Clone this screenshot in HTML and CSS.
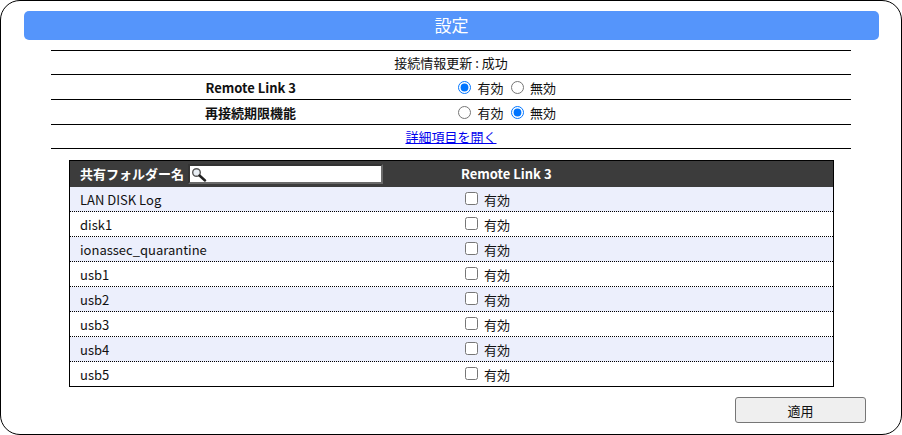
FILE: index.html
```html
<!DOCTYPE html>
<html lang="ja">
<head>
<meta charset="utf-8">
<title>設定</title>
<link rel="stylesheet" href="styles.css">
</head>
<body>
<main class="panel">
  <h1 class="title">設定</h1>
  <section class="settings">
    <div class="row status">接続情報更新 : 成功</div>
    <div class="row">
      <div class="label">Remote Link 3</div>
      <div class="options">
        <label class="opt"><input type="radio" name="a" checked><span>有効</span></label>
        <label class="opt"><input type="radio" name="a"><span>無効</span></label>
      </div>
    </div>
    <div class="row">
      <div class="label">再接続期限機能</div>
      <div class="options">
        <label class="opt"><input type="radio" name="b"><span>有効</span></label>
        <label class="opt"><input type="radio" name="b" checked><span>無効</span></label>
      </div>
    </div>
    <div class="row link-row"><a href="#">詳細項目を開く</a></div>
  </section>
  <section class="shares">
    <div class="thead">
      <div class="name-col">
        <span>共有フォルダー名</span>
        <span class="search">
          <svg width="16" height="16" viewBox="0 0 16 16" class="lens"><circle cx="4.5" cy="6.5" r="3.8" fill="#e8eef4" stroke="#555" stroke-width="1.4"/><path d="M7.5 9.5l5.5 5" stroke="#222" stroke-width="2.4" stroke-linecap="round"/></svg>
        </span>
      </div>
      <div class="rl-col">Remote Link 3</div>
    </div>
    <div class="trow odd"><div class="name-col">LAN DISK Log</div><label class="check"><input type="checkbox"><span>有効</span></label></div>
    <div class="trow"><div class="name-col">disk1</div><label class="check"><input type="checkbox"><span>有効</span></label></div>
    <div class="trow odd"><div class="name-col">ionassec_quarantine</div><label class="check"><input type="checkbox"><span>有効</span></label></div>
    <div class="trow"><div class="name-col">usb1</div><label class="check"><input type="checkbox"><span>有効</span></label></div>
    <div class="trow odd"><div class="name-col">usb2</div><label class="check"><input type="checkbox"><span>有効</span></label></div>
    <div class="trow"><div class="name-col">usb3</div><label class="check"><input type="checkbox"><span>有効</span></label></div>
    <div class="trow odd"><div class="name-col">usb4</div><label class="check"><input type="checkbox"><span>有効</span></label></div>
    <div class="trow last"><div class="name-col">usb5</div><label class="check"><input type="checkbox"><span>有効</span></label></div>
  </section>
  <div class="actions"><button type="button" class="apply">適用</button></div>
</main>
</body>
</html>
```
FILE: styles.css
```css
* { box-sizing: border-box; }
html, body { margin: 0; padding: 0; background: #fff; }
body {
  width: 902px;
  height: 435px;
  overflow: hidden;
  font-family: "Noto Sans CJK JP", "Noto Sans", sans-serif;
  font-size: 13px;
  line-height: 19px;
  color: #111;
}
.panel {
  width: 902px;
  height: 435px;
  border: 1px solid #000;
  border-radius: 20px;
  padding: 10px 22px 0 23px;
}
.title {
  margin: 0;
  height: 29px;
  background: #5595fb;
  border-radius: 5px;
  color: #fff;
  font-size: 17px;
  font-weight: 400;
  line-height: 28px;
  text-align: center;
}
.settings {
  margin: 10px 28px 0 27px;
  border-top: 1px solid #000;
}
.row {
  display: flex;
  align-items: center;
  height: 25px;
  border-bottom: 1px solid #000;
}
.status, .link-row { height: 24px; justify-content: center; }
.label {
  width: 245px;
  text-align: right;
  font-weight: 700;
}
.options {
  display: flex;
  margin-left: 162px;
  gap: 7px;
}
.opt { display: flex; align-items: center; }
.opt input { margin: 0 6.5px 0 0; width: 13px; height: 13px; accent-color: #0075ff; }
.link-row a { color: #00e; }
.shares {
  margin: 11px 45px 0 45px;
  border: 1px solid #000;
}
.thead {
  display: flex;
  align-items: center;
  height: 26px;
  padding-bottom: 2px;
  background: #3c3c3c;
  color: #fff;
  font-weight: 700;
}
.name-col { width: 391px; padding-left: 10px; display: flex; align-items: center; }
.search {
  display: flex;
  align-items: center;
  width: 195px;
  height: 20px;
  margin: 2px 0 0 4px;
  background: #fff;
  border: 2px solid #6b6b6b;
  border-top-color: #333;
  border-left-color: #333;
}
.lens { margin-left: 2px; }
.trow {
  display: flex;
  align-items: center;
  height: 25px;
  border-bottom: 1px dotted #000;
}
.trow.odd { background: #eceffc; }
.trow.last { border-bottom: 0; height: 24px; }
.check { display: flex; align-items: center; margin-left: 4px; }
.check input { margin: 0 6px 2px 0; width: 13px; height: 13px; }
.actions {
  display: flex;
  justify-content: flex-end;
  margin-top: 10px;
  padding-right: 13px;
}
.apply {
  width: 131px;
  height: 26px;
  background: #efefef;
  border: 1px solid #767676;
  border-radius: 3px;
  font: inherit;
  color: #111;
  padding: 0;
}
```
